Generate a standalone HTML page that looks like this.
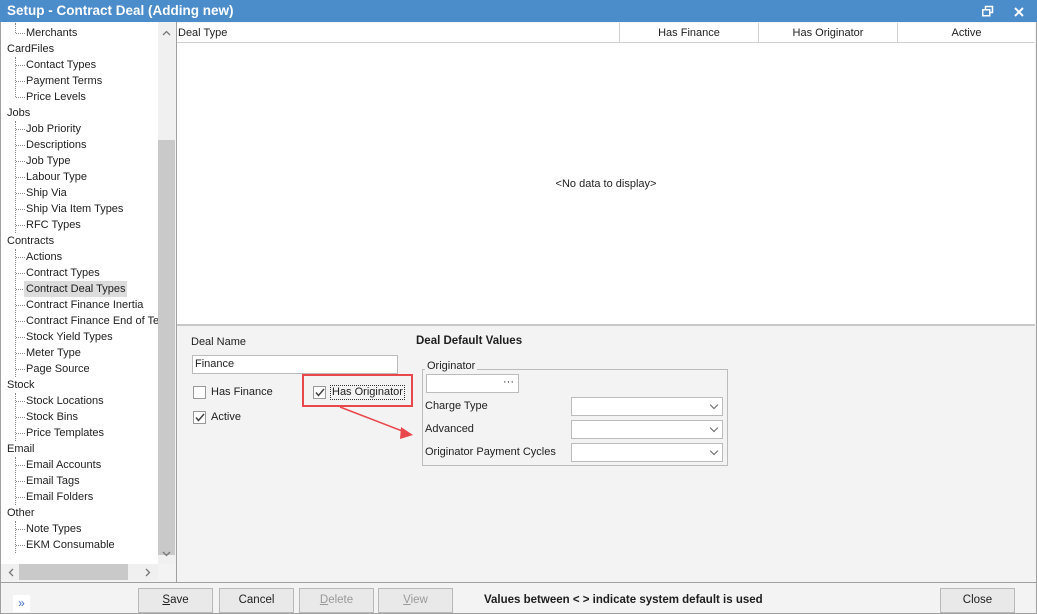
<!DOCTYPE html>
<html><head><meta charset="utf-8"><style>
*{box-sizing:border-box;margin:0;padding:0}
body{width:1037px;height:614px;overflow:hidden;font-family:"Liberation Sans",sans-serif;font-size:11px;color:#1e1e1e;background:#f3f3f3;position:relative}
.a{position:absolute}
.ti{position:absolute;height:16px;line-height:16px;white-space:nowrap}
.dot{position:absolute;border-top:1px dotted #888;width:9px}
.btn{position:absolute;top:588px;height:25px;border:1px solid #b9b9b9;background:#e9e9e9;text-align:center;line-height:23px;font-size:11.5px}
.cb{position:absolute;width:13px;height:13px;border:1px solid #999;background:#fff}
.dd{position:absolute;left:571px;width:152px;height:19px;border:1px solid #bbb;background:#fff}
.dd:after{content:"";position:absolute;right:5px;top:4px;width:5px;height:5px;border-right:1.5px solid #666;border-bottom:1.5px solid #666;transform:rotate(45deg)}
</style></head><body>
<div class="a" style="left:0;top:0;width:1037px;height:22px;background:#4b8ccb;color:#fff;font-weight:bold;font-size:13.5px;line-height:22px;padding-left:7px">Setup - Contract Deal (Adding new)</div>
<svg class="a" style="left:982px;top:5px" width="12" height="12"><rect x="3.5" y="1.5" width="7" height="6" fill="none" stroke="#fff" stroke-width="1.5"/><rect x="0.75" y="4.75" width="7" height="6" fill="#4b8ccb" stroke="#fff" stroke-width="1.5"/></svg>
<svg class="a" style="left:1014px;top:7px" width="10" height="10"><path d="M1 1L9 9M9 1L1 9" stroke="#fff" stroke-width="2"/></svg>
<div class="a" style="left:0;top:22px;width:1037px;height:592px;border:1px solid #a0a0a0;border-top:none"></div>
<div class="a" style="left:1px;top:22px;width:157px;height:542px;background:#fff"></div>
<div id="tree"></div>
<div class="a" style="left:158px;top:22px;width:17px;height:542px;background:#f0f0f0"></div>
<div class="a" style="left:158px;top:140px;width:17px;height:415px;background:#c9c9c9"></div>
<svg class="a" style="left:162px;top:30px" width="9" height="6"><path d="M1 5L4.5 1.5L8 5" fill="none" stroke="#777" stroke-width="1.3"/></svg>
<svg class="a" style="left:162px;top:551px" width="9" height="6"><path d="M1 1L4.5 4.5L8 1" fill="none" stroke="#777" stroke-width="1.3"/></svg>
<div class="a" style="left:1px;top:564px;width:157px;height:16px;background:#f0f0f0"></div>
<div class="a" style="left:19px;top:564px;width:109px;height:16px;background:#c9c9c9"></div>
<svg class="a" style="left:8px;top:568px" width="6" height="9"><path d="M5 1L1.5 4.5L5 8" fill="none" stroke="#777" stroke-width="1.3"/></svg>
<svg class="a" style="left:145px;top:568px" width="6" height="9"><path d="M1 1L4.5 4.5L1 8" fill="none" stroke="#777" stroke-width="1.3"/></svg>
<div class="a" style="left:176px;top:22px;width:1px;height:560px;background:#a0a0a0"></div>
<div class="a" style="left:177px;top:23px;width:858px;height:301px;background:#fff"></div>
<div class="a" style="left:177px;top:23px;width:858px;height:20px;border-bottom:1px solid #d0d0d0;line-height:21px">
<span class="a" style="left:1px">Deal Type</span>
<div class="a" style="left:442px;width:139px;height:19px;border-left:1px solid #d0d0d0;text-align:center">Has Finance</div>
<div class="a" style="left:581px;width:139px;height:19px;border-left:1px solid #d0d0d0;text-align:center">Has Originator</div>
<div class="a" style="left:720px;width:138px;height:19px;border-left:1px solid #d0d0d0;text-align:center">Active</div>
</div>
<div class="a" style="left:177px;top:178px;width:858px;text-align:center">&lt;No data to display&gt;</div>
<div class="a" style="left:177px;top:324px;width:858px;height:2px;background:#c8c8c8"></div>
<div class="a" style="left:191px;top:336px">Deal Name</div>
<div class="a" style="left:192px;top:355px;width:206px;height:19px;border:1px solid #bbb;background:#fff;padding-left:2px;line-height:17px">Finance</div>
<div class="cb" style="left:193px;top:386px"></div><div class="a" style="left:211px;top:386px">Has Finance</div>
<div class="cb" style="left:193px;top:411px"></div>
<svg class="a" style="left:195px;top:413px" width="10" height="9"><path d="M1 4.5L3.5 7.5L9 1" fill="none" stroke="#444" stroke-width="1.5"/></svg>
<div class="a" style="left:211px;top:411px">Active</div>
<div class="a" style="left:302px;top:374px;width:111px;height:33px;border:2px solid #e8474b"></div>
<div class="cb" style="left:313px;top:386px"></div>
<svg class="a" style="left:315px;top:388px" width="10" height="9"><path d="M1 4.5L3.5 7.5L9 1" fill="none" stroke="#444" stroke-width="1.5"/></svg>
<div class="a" style="left:330px;top:385px;border:1px dotted #333;padding:0 1px;line-height:13px">Has Originator</div>
<svg class="a" style="left:0;top:0" width="1037" height="614"><line x1="340" y1="407" x2="410" y2="434" stroke="#e8474b" stroke-width="1.5"/><path d="M401 427L413 435L400 439Z" fill="#e8474b"/></svg>
<div class="a" style="left:416px;top:335px;font-weight:bold;font-size:11.5px">Deal Default Values</div>
<div class="a" style="left:422px;top:369px;width:306px;height:97px;border:1px solid #bbb"></div>
<div class="a" style="left:425px;top:360px;background:#f3f3f3;padding:0 2px">Originator</div>
<div class="a" style="left:426px;top:374px;width:93px;height:19px;border:1px solid #bbb;background:#fff;text-align:right;padding-right:4px;line-height:14px">···</div>
<div class="a" style="left:425px;top:400px">Charge Type</div><div class="dd" style="top:397px"></div>
<div class="a" style="left:425px;top:423px">Advanced</div><div class="dd" style="top:420px"></div>
<div class="a" style="left:425px;top:446px">Originator Payment Cycles</div><div class="dd" style="top:443px"></div>
<div class="a" style="left:1px;top:582px;width:1035px;height:1px;background:#a0a0a0"></div>
<div class="a" style="left:13px;top:595px;width:17px;height:17px;background:#fff;color:#3b6fc4;font-size:12px;text-align:center;line-height:16px">»</div>
<div class="btn" style="left:138px;width:75px"><u>S</u>ave</div>
<div class="btn" style="left:219px;width:75px">Cancel</div>
<div class="btn" style="left:299px;width:75px;color:#999"><u>D</u>elete</div>
<div class="btn" style="left:378px;width:75px;color:#999"><u>V</u>iew</div>
<div class="a" style="left:484px;top:594px;font-weight:bold;font-size:11.5px">Values between &lt; &gt; indicate system default is used</div>
<div class="btn" style="left:940px;width:75px">Close</div>
<script>
var items=[["Merchants",1],["CardFiles",0],["Contact Types",1],["Payment Terms",1],["Price Levels",1],["Jobs",0],["Job Priority",1],["Descriptions",1],["Job Type",1],["Labour Type",1],["Ship Via",1],["Ship Via Item Types",1],["RFC Types",1],["Contracts",0],["Actions",1],["Contract Types",1],["Contract Deal Types",1],["Contract Finance Inertia",1],["Contract Finance End of Te",1],["Stock Yield Types",1],["Meter Type",1],["Page Source",1],["Stock",0],["Stock Locations",1],["Stock Bins",1],["Price Templates",1],["Email",0],["Email Accounts",1],["Email Tags",1],["Email Folders",1],["Other",0],["Note Types",1],["EKM Consumable",1]];
var h="";
items.forEach(function(it,i){var y=25+i*16;
if(it[1]){h+='<div class="dot" style="left:16px;top:'+(y+8)+'px"></div>';
h+='<div class="ti" style="left:24px;top:'+y+'px;padding:0 2px;'+(i==16?'background:#dcdcdc;':'')+'">'+it[0]+'</div>';}
else{h+='<div class="ti" style="left:7px;top:'+y+'px">'+it[0]+'</div>';}
});
var s=[[23,33],[57,97],[121,233],[249,377],[393,441],[457,505],[521,553]];
s.forEach(function(r){h+='<div class="a" style="left:15px;top:'+r[0]+'px;height:'+(r[1]-r[0])+'px;border-left:1px dotted #888"></div>'});
document.getElementById("tree").innerHTML='<div class="a" style="left:0;top:0;width:158px;height:564px;overflow:hidden">'+h+'</div>';
</script>
</body></html>
